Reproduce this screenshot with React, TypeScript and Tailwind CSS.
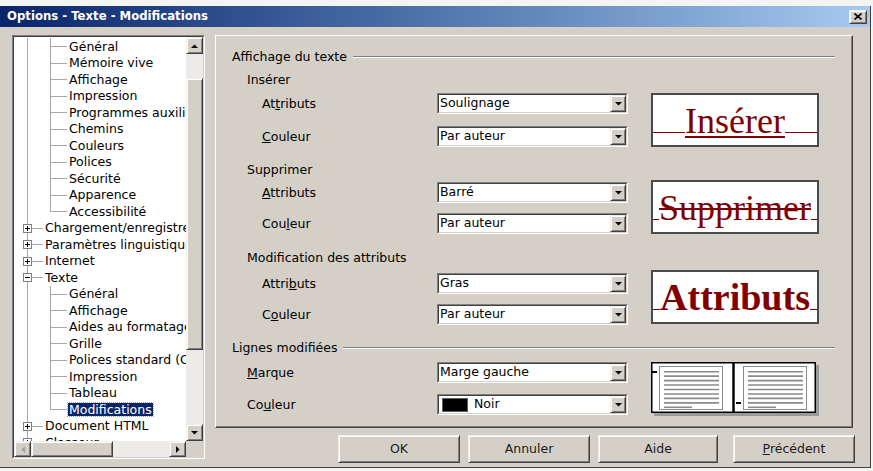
import type { ReactNode } from 'react';

type TreeItem = {
  label: string;
  top?: boolean;
  open?: boolean;
  last?: boolean;
  selected?: boolean;
};

const treeItems: TreeItem[] = [
  { label: 'Général' },
  { label: 'Mémoire vive' },
  { label: 'Affichage' },
  { label: 'Impression' },
  { label: 'Programmes auxiliaires' },
  { label: 'Chemins' },
  { label: 'Couleurs' },
  { label: 'Polices' },
  { label: 'Sécurité' },
  { label: 'Apparence' },
  { label: 'Accessibilité', last: true },
  { label: 'Chargement/enregistrement', top: true },
  { label: 'Paramètres linguistiques', top: true },
  { label: 'Internet', top: true },
  { label: 'Texte', top: true, open: true },
  { label: 'Général' },
  { label: 'Affichage' },
  { label: 'Aides au formatage' },
  { label: 'Grille' },
  { label: 'Polices standard (Occidental)' },
  { label: 'Impression' },
  { label: 'Tableau' },
  { label: 'Modifications', last: true, selected: true },
  { label: 'Document HTML', top: true },
  { label: 'Classeur', top: true },
];

// bord en relief façon Windows classique
const raised =
  'border border-t-[#f1efe9] border-l-[#f1efe9] border-r-[#404040] border-b-[#404040] shadow-[inset_1px_1px_0_#ffffff,inset_-1px_-1px_0_#808080]';

function Tri({ dir, color = '#000000' }: { dir: 'up' | 'down' | 'left' | 'right'; color?: string }) {
  const vertical = dir === 'up' || dir === 'down';
  const points = {
    up: '0,4 7,4 3.5,0.5',
    down: '0,0 7,0 3.5,3.5',
    left: '4,0 4,7 0.5,3.5',
    right: '0,0 0,7 3.5,3.5',
  }[dir];
  return (
    <svg width={vertical ? 7 : 4} height={vertical ? 4 : 7} viewBox={vertical ? '0 0 7 4' : '0 0 4 7'}>
      <polygon points={points} fill={color} />
    </svg>
  );
}

function TreeLines({ item }: { item: TreeItem }) {
  if (item.top) {
    return (
      <svg width={29} height="100%" viewBox="0 0 29 16.5" preserveAspectRatio="none" shapeRendering="crispEdges" className="shrink-0">
        <line x1={13.5} y1={0} x2={13.5} y2={16.5} stroke="#a8a8a8" />
        <line x1={17.5} y1={8.5} x2={29} y2={8.5} stroke="#a8a8a8" />
        <rect x={9.5} y={4.5} width={8} height={8} fill="#ffffff" stroke="#808080" />
        <line x1={11} y1={8.5} x2={16} y2={8.5} stroke="#000000" />
        {!item.open && <line x1={13.5} y1={6} x2={13.5} y2={11} stroke="#000000" />}
      </svg>
    );
  }
  return (
    <svg width={53} height="100%" viewBox="0 0 53 16.5" preserveAspectRatio="none" shapeRendering="crispEdges" className="shrink-0">
      <line x1={13.5} y1={0} x2={13.5} y2={16.5} stroke="#a8a8a8" />
      <line x1={36.5} y1={0} x2={36.5} y2={item.last ? 8.5 : 16.5} stroke="#a8a8a8" />
      <line x1={36.5} y1={8.5} x2={53} y2={8.5} stroke="#a8a8a8" />
    </svg>
  );
}

function Tree() {
  return (
    <div className="h-[424px] w-[193px] shrink-0 border border-t-[#808080] border-l-[#808080] border-r-white border-b-white">
      <div className="flex h-full flex-col border border-t-[#404040] border-l-[#404040] border-r-[#d4d0c8] border-b-[#d4d0c8]">
        <div className="flex min-h-0 flex-1">
          <div className="flex min-w-0 flex-1 flex-col overflow-hidden bg-white pt-px">
            {treeItems.map((item, i) => (
              <div key={i} className="flex h-[16.5px] shrink-0 items-stretch whitespace-nowrap">
                <TreeLines item={item} />
                <span
                  className={
                    item.selected
                      ? 'ml-px self-center bg-[#0a246a] px-px leading-[13px] text-white outline-1 outline-dotted outline-[#9aa8c8]'
                      : 'ml-px self-center px-px leading-[13px]'
                  }
                >
                  {item.label}
                </span>
              </div>
            ))}
          </div>
          {/* barre verticale */}
          <div className="flex w-[17px] flex-col bg-[#ecebe8]">
            <div className={`flex h-[17px] items-center justify-center bg-[#d4d0c8] ${raised}`}>
              <Tri dir="up" />
            </div>
            <div className="h-[24px]" />
            <div className={`h-[272px] bg-[#d4d0c8] ${raised}`} />
            <div className="flex-1" />
            <div className={`flex h-[17px] items-center justify-center bg-[#d4d0c8] ${raised}`}>
              <Tri dir="down" />
            </div>
          </div>
        </div>
        {/* barre horizontale */}
        <div className="flex h-[16px] bg-[#ecebe8]">
          <div className={`flex w-[17px] items-center justify-center bg-[#d4d0c8] ${raised}`}>
            <Tri dir="left" color="#a0a0a0" />
          </div>
          <div className={`w-[82px] bg-[#d4d0c8] ${raised}`} />
          <div className="flex-1" />
          <div className={`flex w-[17px] items-center justify-center bg-[#d4d0c8] ${raised}`}>
            <Tri dir="right" />
          </div>
          <div className="w-[17px] bg-[#d4d0c8]" />
        </div>
      </div>
    </div>
  );
}

function Combo({ children }: { children: ReactNode }) {
  return (
    <div className="flex h-[21px] w-[191px] shrink-0 border border-t-[#808080] border-l-[#808080] border-r-white border-b-white">
      <div className="flex flex-1 border border-t-[#404040] border-l-[#404040] border-r-[#d4d0c8] border-b-[#d4d0c8] bg-white">
        <div className="flex flex-1 items-center pl-px leading-none">{children}</div>
        <div className={`flex w-[16px] items-center justify-center bg-[#d4d0c8] ${raised}`}>
          <Tri dir="down" />
        </div>
      </div>
    </div>
  );
}

function Row({ label, indent, children }: { label: ReactNode; indent: string; children: ReactNode }) {
  return (
    <div className="flex h-[21px] items-center">
      <div className={`w-[205px] shrink-0 leading-[15px] ${indent}`}>{label}</div>
      <Combo>{children}</Combo>
    </div>
  );
}

function Header({ title, className }: { title: string; className: string }) {
  return (
    <div className={`flex items-center leading-[15px] ${className}`}>
      <span>{title}</span>
      <div className="ml-[6px] h-[2px] flex-1 border-t border-b border-t-[#808080] border-b-white" />
    </div>
  );
}

function Preview({ children, className }: { children: ReactNode; className: string }) {
  return (
    <div className={`ml-[23px] flex h-[54px] w-[168px] shrink-0 items-end border-2 border-[#4a4a4a] bg-white pb-[6px] font-['Liberation_Serif','Times_New_Roman',serif] text-[36px] leading-none text-[#800000] ${className}`}>
      <span className="mb-[6px] h-px flex-1 bg-[#800000]" />
      {children}
      <span className="mb-[6px] h-px flex-1 bg-[#800000]" />
    </div>
  );
}

function Page({ dashY }: { dashY: number }) {
  const lines = [0, 1, 2, 3, 4, 5, 6, 7, 8];
  return (
    <g>
      <rect x={8.5} y={4.5} width={63} height={43} fill="#ffffff" stroke="#8a8a8a" />
      {lines.map((n) => (
        <line
          key={n}
          x1={13}
          y1={9.7 + n * 4.45}
          x2={n === 8 ? 41 : 68}
          y2={9.7 + n * 4.45}
          stroke="#8a8a8a"
          strokeWidth={1.6}
        />
      ))}
      <line x1={1} y1={dashY} x2={6} y2={dashY} stroke="#000000" strokeWidth={2} />
    </g>
  );
}

function MarginPreview() {
  return (
    <svg width={168} height={54} viewBox="0 0 168 54" className="ml-[23px] shrink-0">
      <rect x={3} y={3} width={165} height={51} fill="#9a9a9a" />
      <rect x={0.75} y={0.75} width={163.5} height={49.5} fill="#ffffff" stroke="#000000" strokeWidth={1.5} />
      <Page dashY={10} />
      <g transform="translate(84 0)">
        <Page dashY={41} />
      </g>
      <line x1={82.5} y1={0} x2={82.5} y2={51} stroke="#000000" strokeWidth={2.5} />
    </svg>
  );
}

function Panel() {
  return (
    <div className="flex h-[393px] w-[638px] flex-col border border-t-white border-l-white border-r-[#404040] border-b-[#404040] pr-[17px] pl-[16px] shadow-[inset_-1px_-1px_0_#808080]">
      <Header title="Affichage du texte" className="mt-[13px]" />

      <div className="mt-[8px] pl-[15px] leading-[15px]">Insérer</div>
      <div className="mt-[6px] flex items-start">
        <div className="flex flex-col gap-[12px]">
          <Row indent="pl-[30px]" label={<>At<span className="underline">t</span>ributs</>}>Soulignage</Row>
          <Row indent="pl-[30px]" label={<><span className="underline">C</span>ouleur</>}>Par auteur</Row>
        </div>
        <Preview className="">
          <span className="underline decoration-2 underline-offset-[3px]">Insérer</span>
        </Preview>
      </div>

      <div className="mt-[15px] pl-[15px] leading-[15px]">Supprimer</div>
      <div className="mt-[5px] flex items-start">
        <div className="flex flex-col gap-[10px]">
          <Row indent="pl-[30px]" label={<><span className="underline">A</span>ttributs</>}>Barré</Row>
          <Row indent="pl-[30px]" label={<>Cou<span className="underline">l</span>eur</>}>Par auteur</Row>
        </div>
        <Preview className="-mt-[2px]">
          <span className="line-through decoration-2">Supprimer</span>
        </Preview>
      </div>

      <div className="mt-[16px] pl-[15px] leading-[15px]">Modification des attributs</div>
      <div className="mt-[8px] flex items-start">
        <div className="flex flex-col gap-[10px]">
          <Row indent="pl-[30px]" label={<>Attri<span className="underline">b</span>uts</>}>Gras</Row>
          <Row indent="pl-[30px]" label={<>C<span className="underline">o</span>uleur</>}>Par auteur</Row>
        </div>
        <Preview className="-mt-[3px]">
          <span className="text-[38px] font-bold">Attributs</span>
        </Preview>
      </div>

      <Header title="Lignes modifiées" className="mt-[15px]" />
      <div className="mt-[7px] flex items-start">
        <div className="flex flex-col gap-[11px]">
          <Row indent="pl-[15px]" label={<><span className="underline">M</span>arque</>}>Marge gauche</Row>
          <Row indent="pl-[15px]" label={<>Co<span className="underline">u</span>leur</>}>
            <div className="ml-[2px] h-[14px] w-[26px] border border-[#606060] bg-black" />
            <span className="ml-[6px]">Noir</span>
          </Row>
        </div>
        <MarginPreview />
      </div>
    </div>
  );
}

function Btn({ children, className }: { children: ReactNode; className: string }) {
  return (
    <div className={`flex h-[28px] items-center justify-center bg-[#d4d0c8] text-[#1a1a1a] ${raised} ${className}`}>
      {children}
    </div>
  );
}

export default function App() {
  return (
    <div className="h-[471px] w-[873px] overflow-hidden bg-[#f4f4f2] font-['DejaVu_Sans',Verdana,sans-serif] text-[12.5px] text-black">
      <div className="mt-[6px] flex h-[462px] w-[871px] flex-col border-r border-b border-r-[#404040] border-b-[#404040] bg-[#d4d0c8]">
        {/* barre de titre */}
        <div className="flex h-[21px] shrink-0 items-center justify-between bg-linear-to-r from-[#0a246a] to-[#a6caf0] pr-[3px] pl-[7px]">
          <span className="text-[11.7px] leading-none font-bold text-white">Options - Texte - Modifications</span>
          <div className={`flex h-[14px] w-[18px] items-center justify-center bg-[#d4d0c8] ${raised}`}>
            <svg width={8} height={7} viewBox="0 0 8 7">
              <path d="M0.5 0.5 L7.5 6.5 M7.5 0.5 L0.5 6.5" stroke="#000000" strokeWidth={1.6} />
            </svg>
          </div>
        </div>

        <div className="flex pt-[8px] pl-[12px]">
          <Tree />
          <div className="ml-[10px] flex w-[640px] flex-col">
            <Panel />
            <div className="mt-[7px] flex">
              <Btn className="ml-[123px] w-[122px]">OK</Btn>
              <Btn className="ml-[8px] w-[122px]">Annuler</Btn>
              <Btn className="ml-[8px] w-[120px]">Aide</Btn>
              <Btn className="ml-[15px] w-[122px]">
                <span>
                  <span className="underline">P</span>récédent
                </span>
              </Btn>
            </div>
          </div>
        </div>
      </div>
    </div>
  );
}
